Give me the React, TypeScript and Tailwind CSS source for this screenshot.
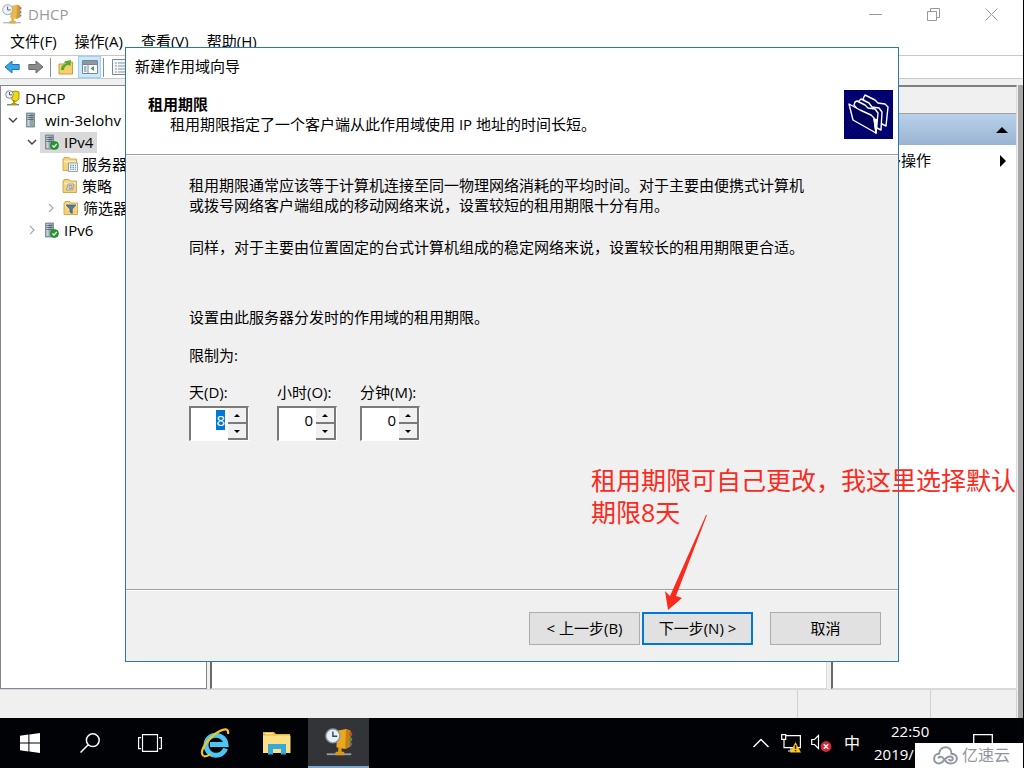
import React, { useEffect, useRef, useState } from 'react';

const DhcpIcon = ({ className }) => (
  <svg viewBox="0 0 32 32" className={className}>
    <path d="M2 29h28v2H2z" fill="#9aa0a6" />
    <path d="M15 22h4v5h3v4H12v-4h3z" fill="#d99a1c" />
    <path d="M14 3l10-2 5 2v18l-6 3-10-2z" fill="#e9a820" />
    <path d="M24 1l5 2v18l-6 3z" fill="#c77f12" />
    <path d="M28 5h3v4h-3z" fill="#c0453a" />
    <path d="M28 11h3v4h-3z" fill="#4d8f3a" />
    <path d="M28 17h3v3h-3z" fill="#3c74b5" />
    <circle cx="9" cy="9" r="8" fill="#e8eff5" stroke="#8a97a3" strokeWidth="1.6" />
    <path d="M9 4v5.5h5" fill="none" stroke="#33475b" strokeWidth="1.6" />
  </svg>
);

const DhcpRootIcon = () => (
  <svg viewBox="0 0 16 16" className="h-4 w-4">
    <path d="M2 14h12v1.4H2z" fill="#7b8288" />
    <path d="M8 10h2v3h1.5v2h-5v-2H8z" fill="#b89b00" />
    <path d="M6 2l5-1 3 1v7l-3 2.5L7 10z" fill="#f2d90a" stroke="#8d7b00" strokeWidth=".8" />
    <circle cx="4.5" cy="4.5" r="3.8" fill="#eef3f6" stroke="#737c85" strokeWidth=".9" />
    <path d="M4.5 2v2.8H7" fill="none" stroke="#444" strokeWidth=".9" />
  </svg>
);

const ServerIcon = ({ checked }) => (
  <svg viewBox="0 0 16 16" className="h-4 w-4">
    <path d="M1.5 1h8v14h-8z" fill="#93a3ae" stroke="#6f7d88" strokeWidth=".8" />
    <path d="M2.5 2h2v12h-2z" fill="#c9d4dc" />
    <path d="M2.5 3.5h6M2.5 5.5h6M2.5 7.5h6" stroke="#4d5c68" strokeWidth=".8" />
    <path d="M6.5 11h2v1.5h-2z" fill="#66d24a" />
    {checked && (
      <>
        <circle cx="10.5" cy="11.5" r="4" fill="#1f9d2c" stroke="#0e7319" strokeWidth=".6" />
        <path d="M8.4 11.5l1.6 1.6 2.8-3.2" fill="none" stroke="#fff" strokeWidth="1.3" />
      </>
    )}
  </svg>
);

const FolderIcon = ({ kind }) => (
  <svg viewBox="0 0 16 16" className="h-4 w-4">
    <path d="M1 3h1V1.5h5L8 3h6.5v11.5H1z" fill="#f3d37c" stroke="#cfa544" strokeWidth=".9" />
    <path d="M2 4.5h12v2H2z" fill="#fbe9b5" />
    {kind === 'options' && (
      <>
        <path d="M6.5 7h9v8.5h-9z" fill="#f5f8fb" stroke="#7f8b96" strokeWidth=".8" />
        <path d="M8 9.3h6M8 11.3h6M8 13.3h6" stroke="#3f7fb8" strokeWidth="1.1" strokeDasharray="1.5 1" />
      </>
    )}
    {kind === 'policy' && (
      <path d="M6 6h6l-1.5 6H4.5zM7 7.5v3h3v-3z" fill="#e6eaee" stroke="#8c8f93" strokeWidth=".8" />
    )}
    {kind === 'filter' && <path d="M3 5h10L9.2 9v4.5L7 12V9z" fill="#55799c" stroke="#37536e" strokeWidth=".7" />}
  </svg>
);

const Chevron = ({ open }) => (
  <svg viewBox="0 0 10 10" className="h-2.5 w-2.5">
    {open ? (
      <path d="M1 3l4 4 4-4" fill="none" stroke="#404040" strokeWidth="1.4" />
    ) : (
      <path d="M3 .8L7 5 3 9.2" fill="none" stroke="#a6a6a6" strokeWidth="1.2" />
    )}
  </svg>
);

const ArrowIcon = ({ flip, fill, stroke }) => (
  <svg viewBox="0 0 16 14" className="h-3.5 w-4">
    <path
      d="M1 7l7-6v3.5h7.2v5H8V13z"
      transform={flip ? 'matrix(-1 0 0 1 16 0)' : undefined}
      fill={fill}
      stroke={stroke}
    />
  </svg>
);

const treeItems = [
  { label: 'DHCP', pad: 'pl-1', icon: <DhcpRootIcon /> },
  { label: 'win-3elohv', pad: 'pl-[7px]', chevron: 'open', icon: <ServerIcon /> },
  { label: 'IPv4', pad: 'pl-[26px]', chevron: 'open', icon: <ServerIcon checked />, selected: true },
  { label: '服务器', pad: 'pl-[61px]', icon: <FolderIcon kind="options" /> },
  { label: '策略', pad: 'pl-[61px]', icon: <FolderIcon kind="policy" /> },
  { label: '筛选器', pad: 'pl-[45px]', chevron: 'closed', icon: <FolderIcon kind="filter" /> },
  { label: 'IPv6', pad: 'pl-[26px]', chevron: 'closed', icon: <ServerIcon checked /> },
];

const Tree = () => (
  <nav className="w-[207px] shrink-0 overflow-hidden border border-[#828790] bg-white pt-px">
    <ul>
      {treeItems.map((item) => (
        <li key={item.label} className={`flex h-[22px] items-center whitespace-nowrap ${item.pad}`}>
          {item.chevron && (
            <span className="mr-[3px] w-2.5">
              <Chevron open={item.chevron === 'open'} />
            </span>
          )}
          <span className={`flex h-[21px] items-center gap-1 px-1 ${item.chevron ? '' : '-ml-1'} ${item.selected ? 'bg-[#d9d9d9]' : ''}`}>
            {item.icon}
            <span>{item.label}</span>
          </span>
        </li>
      ))}
    </ul>
  </nav>
);

const Toolbar = () => (
  <div className="flex h-[24px] items-center border-y border-[#c8c8c8] bg-white pl-1">
    <button aria-label="后退" className="mr-2"><ArrowIcon fill="#38a5e8" stroke="#1b76b8" /></button>
    <button aria-label="前进"><ArrowIcon flip fill="#8c8c8c" stroke="#6b6b6b" /></button>
    <span className="mx-1.5 h-[19px] w-px bg-[#8d8d8d]" />
    <button aria-label="向上" className="ml-px">
      <svg viewBox="0 0 16 16" className="h-4 w-4">
        <path d="M1 5h5l1-2h7.500v12H1z" fill="#f4cf6b" stroke="#c99e3b" />
        <path d="M3 11c0-4 2-6 5-6L6.500 2.500 13 1l-.5 6-2-1C8 6 6 8 6 11z" fill="#4fae2e" />
      </svg>
    </button>
    <button aria-label="显示树" className="ml-1 flex h-[22px] w-[23px] items-center justify-center border border-[#99d1ff] bg-[#cce8ff]">
      <svg viewBox="0 0 16 14" className="h-3.5 w-4">
        <path d="M.5.5h15v13H.5z" fill="#fff" stroke="#7a8791" />
        <path d="M1 1h14v3H1z" fill="#8b98a2" />
        <path d="M6 4v9M1 4.500h14" stroke="#7a8791" />
        <path d="M2 7h2.500M2 9h2.500M2 11h2.500" stroke="#3c74b5" />
        <path d="M12 6v5L8.500 8.500z" fill="#3f9f3a" />
      </svg>
    </button>
    <span className="mx-0.5 h-[19px] w-px bg-[#8d8d8d]" />
    <button aria-label="属性" className="ml-1.5">
      <svg viewBox="0 0 16 16" className="h-4 w-4">
        <path d="M.5.5h15v15H.5z" fill="#f4f6f8" stroke="#7a8791" />
        <path d="M3 4h2M3 7h2M3 10h2M3 13h2M6 4h8M6 7h8M6 10h8M6 13h8" stroke="#8595a1" />
      </svg>
    </button>
  </div>
);

const Spinner = ({ id, label, initial, selected }) => {
  const [value, setValue] = useState(initial);
  const inputRef = useRef(null);

  useEffect(() => {
    if (selected && inputRef.current) {
      inputRef.current.focus();
      inputRef.current.select();
    }
  }, [selected]);

  return (
    <div className="flex flex-col gap-1">
      <label htmlFor={id} className="h-5 whitespace-nowrap">{label}</label>
      <div className="flex h-[35px] w-[60px] border border-t-2 border-l-2 border-white border-t-[#7a7a7a] border-l-[#7a7a7a] bg-white">
        <input
          ref={inputRef}
          id={id}
          type="text"
          value={value}
          onChange={(e) => setValue(e.target.value)}
          className="h-6 w-0 flex-1 bg-white pr-[3px] text-right text-[15px] outline-none selection:bg-[#0078d7] selection:text-white"
        />
        <div className="flex w-5 flex-col bg-[#f0f0f0]">
          <button
            aria-label={`${label} +`}
            onClick={() => setValue(String(Number(value) + 1))}
            className="flex flex-1 items-center justify-center border-r-2 border-b-2 border-[#7a7a7a]"
          >
            <svg viewBox="0 0 6 3" className="h-[3px] w-1.5"><path d="M0 3l3-3 3 3z" /></svg>
          </button>
          <button
            aria-label={`${label} -`}
            onClick={() => setValue(String(Math.max(0, Number(value) - 1)))}
            className="flex flex-1 items-center justify-center border-r-2 border-b-2 border-[#7a7a7a]"
          >
            <svg viewBox="0 0 6 3" className="h-[3px] w-1.5"><path d="M0 0l3 3 3-3z" /></svg>
          </button>
        </div>
      </div>
    </div>
  );
};

const Wizard = () => (
  <section className="absolute top-[47px] left-[125px] flex h-[615px] w-[774px] flex-col border border-[#2a7ab0] bg-[#f0f0f0]">
    <header className="flex h-[107px] shrink-0 flex-col border-b border-[#a0a0a0] bg-white">
      <h1 className="h-[38px] pl-[9px] leading-9">新建作用域向导</h1>
      <div className="flex items-start justify-between pr-[5px] pl-[22px]">
        <div className="pt-2 leading-5">
          <h2 className="font-bold">租用期限</h2>
          <p className="pl-[22px]">租用期限指定了一个客户端从此作用域使用 IP 地址的时间长短。</p>
        </div>
        <svg viewBox="0 0 49 49" className="mt-1 h-[49px] w-[49px]">
          <defs>
            <pattern id="dots" width="4" height="4" patternUnits="userSpaceOnUse">
              <path d="M0 0h4v4H0z" fill="#000080" />
              <path d="M0 0h2v2H0zM2 2h2v2H2z" fill="#00005c" />
            </pattern>
          </defs>
          <path d="M0 0h49v49H0z" fill="url(#dots)" />
          <g fill="#00005c" stroke="#fff" strokeWidth="1.4" strokeLinejoin="round">
            <path d="M19 9l2-4 10 5 3 3 7 1 3 3-2 19-4-2z" />
            <path d="M14 12l3-3 8 4 3 4 7 1 3 4-1 18-4-2z" />
            <path d="M10 15l1-3 2-1 8 4 3 3 7 1 3 4-2 20z" />
            <path d="M5 14l4 16 23 13-2-15-3-3-11-5z" />
            <path d="M32 43l-2-14 3 1z" fill="#fff" />
          </g>
        </svg>
      </div>
    </header>

    <div className="flex-1 border-t border-white pt-[19px] pl-[63px] leading-5">
      <p>
        租用期限通常应该等于计算机连接至同一物理网络消耗的平均时间。对于主要由便携式计算机
        <br />
        或拨号网络客户端组成的移动网络来说，设置较短的租用期限十分有用。
      </p>
      <p className="mt-[22px]">同样，对于主要由位置固定的台式计算机组成的稳定网络来说，设置较长的租用期限更合适。</p>
      <p className="mt-[50px]">设置由此服务器分发时的作用域的租用期限。</p>
      <p className="mt-[18px]">限制为:</p>
      <div className="mt-[17px] flex">
        <div className="w-[88px]"><Spinner id="days" label="天(D):" initial="8" selected /></div>
        <div className="w-[83px]"><Spinner id="hours" label="小时(O):" initial="0" /></div>
        <Spinner id="minutes" label="分钟(M):" initial="0" />
      </div>
    </div>

    <footer className="flex h-[72px] shrink-0 items-start justify-end border-t border-[#a0a0a0]">
      <div className="flex w-full justify-end border-t border-white pt-[21px] pr-[17px]">
        <button className="h-[33px] w-[111px] border border-[#adadad] bg-[#e1e1e1]">&lt; 上一步(B)</button>
        <button className="ml-0.5 h-[33px] w-[111px] border-2 border-[#0078d7] bg-[#e1e1e1]">下一步(N) &gt;</button>
        <button className="ml-[17px] h-[33px] w-[111px] border border-[#adadad] bg-[#e1e1e1]">取消</button>
      </div>
    </footer>
  </section>
);

const Annotation = () => (
  <>
    <p className="absolute top-[464px] left-[591px] text-[25px] leading-8 whitespace-nowrap text-[#fb2a1c]">
      租用期限可自己更改，我这里选择默认
      <br />
      期限8天
    </p>
    <svg viewBox="0 0 46 98" className="absolute top-[514px] left-[662px] h-[98px] w-[46px]">
      <path d="M44 1h1L14 82l6 2L6 96 3 77l5 5z" fill="#fb2a1c" />
    </svg>
  </>
);

const Taskbar = () => (
  <footer className="relative flex h-[50px] shrink-0 items-stretch justify-between bg-[#010205] text-white">
    <div className="flex">
      <button aria-label="开始" className="flex w-[60px] items-center justify-center">
        <svg viewBox="0 0 20 20" className="h-5 w-5" fill="#fff">
          <path d="M0 2.800L8.400 1.600v7.900H0zM9.400 1.500L20 0v9.500H9.400zM0 10.500h8.400v7.900L0 17.200zM9.400 10.500H20V20L9.400 18.500z" />
        </svg>
      </button>
      <button aria-label="搜索" className="flex w-[60px] items-center justify-center">
        <svg viewBox="0 0 20 20" className="h-5 w-5" fill="none" stroke="#fff" strokeWidth="1.500">
          <circle cx="12.800" cy="7.200" r="6.400" />
          <path d="M8.200 11.800L.5 19.500" />
        </svg>
      </button>
      <button aria-label="任务视图" className="flex w-[60px] items-center justify-center">
        <svg viewBox="0 0 24 18" className="h-[18px] w-6" fill="none" stroke="#fff" strokeWidth="1.200">
          <path d="M4.500.6h15v16.800h-15zM3 3.600H.6v11H3M21 3.600h2.400v11H21" />
        </svg>
      </button>
      <button aria-label="Internet Explorer" className="ml-1 flex w-[62px] items-center justify-center">
        <svg viewBox="0 0 30 30" className="h-[30px] w-[30px]" fill="none">
          <path d="M25.500 20.500A10 10 0 1 1 26 16.500H10" stroke="#4cc5f2" strokeWidth="5" />
          <path d="M3.500 28C-1.500 24 7 11 18 4c6-3.800 11-4 10 2" stroke="#f4c51f" strokeWidth="2.200" />
          <path d="M3.500 28c2 1 5-.5 7-1.600" stroke="#f4c51f" strokeWidth="2.200" />
        </svg>
      </button>
      <button aria-label="文件资源管理器" className="flex w-[62px] items-center justify-center">
        <svg viewBox="0 0 28 24" className="h-6 w-7">
          <path d="M0 1h11l2 2h14v4H0z" fill="#e8b93c" />
          <path d="M0 4.500h27.500V22H0z" fill="#fbdf86" />
          <path d="M2 2h8v1.200H2z" fill="#fff3c5" />
          <path d="M5 13h18v10.500h-5V18h-8v5.500H5z" fill="#35a9d8" />
        </svg>
      </button>
      <button aria-label="DHCP" className="flex w-[61px] items-center justify-center border-b-2 border-[#76a9d4] bg-[#333438]">
        <DhcpIcon className="h-7 w-7" />
      </button>
    </div>

    <div className="flex items-center pr-[30px]">
      <svg viewBox="0 0 16 10" className="mr-3 h-2.5 w-4" fill="none" stroke="#fff" strokeWidth="1.400">
        <path d="M.5 9L8 1.500 15.500 9" />
      </svg>
      <svg viewBox="0 0 21 19" className="mr-[9px] h-[19px] w-[21px]">
        <path d="M5 1.600h14.400v12H3V6M7 17h6M10 14v3M.7.7h4v4.600h-4z" fill="none" stroke="#fff" strokeWidth="1.200" />
        <path d="M14.500 8L20 18.500H9z" fill="#fdc41a" />
        <path d="M14.500 11v4M14.500 16v1.300" stroke="#222" strokeWidth="1.500" />
      </svg>
      <svg viewBox="0 0 21 18" className="mr-3 h-[18px] w-[21px]">
        <path d="M.7 5.500h2.800L7.500 1.500v13l-4-4H.7z" fill="none" stroke="#fff" strokeWidth="1.200" />
        <circle cx="15" cy="12.500" r="5.400" fill="#d7263b" />
        <path d="M12.800 10.300l4.400 4.400M17.200 10.300l-4.400 4.400" stroke="#fff" strokeWidth="1.400" />
      </svg>
      <span className="mr-3.5 text-base">中</span>
      <div className="mr-3.5 flex h-full w-[85px] flex-col justify-center leading-[23px]">
        <time className="pl-[17px]">22:50</time>
        <time>2019/</time>
      </div>
      <svg viewBox="0 0 20 18" className="h-[18px] w-5" fill="none" stroke="#fff" strokeWidth="1.300">
        <path d="M.7.700h18.600v13H13l-3 3v-3H.7z" />
      </svg>
    </div>

    <div className="absolute right-0 bottom-0 flex h-[25px] w-[108px] items-center gap-1 bg-white pl-[18px] text-base leading-[25px] text-[#9097a0]">
      <svg viewBox="0 0 25 19" className="h-[19px] w-[25px]" fill="none" stroke="#9097a0" strokeWidth="2">
        <path d="M5.500 12.500c0-2 3-2.500 5 0s3 5 7 5c8 0 8.500-9.500 1-9.800C18.500-1 7-1 6 7.700-.5 8-.5 17.500 6 17.500c5 0 5.500-7 11-7 3.500 0 3.500 4 1 4-1.500 0-2-1-2-1.500" />
      </svg>
      亿速云
    </div>
  </footer>
);

const App = () => {
  return (
    <div className="relative flex min-h-screen flex-col overflow-hidden border-r border-black bg-[#f0f0f0] font-['Open_Sans','Noto_Sans_CJK_SC',sans-serif] text-[15px] text-black">
      <div className="flex h-7 items-center bg-white pl-0.5 text-[#999]">
        <DhcpIcon className="h-5 w-5 opacity-80" />
        <span className="ml-1.5 flex-1">DHCP</span>
        <div className="flex items-center gap-[45px] pr-[25px]">
          <button aria-label="最小化">
            <svg viewBox="0 0 13 13" className="h-[13px] w-[13px]"><path d="M0 6.500h13" stroke="#999" /></svg>
          </button>
          <button aria-label="还原">
            <svg viewBox="0 0 13 13" className="h-[13px] w-[13px]" fill="none" stroke="#999">
              <path d="M.5 3.500h9v9h-9zM3.500 3V.5h9v9H10" />
            </svg>
          </button>
          <button aria-label="关闭">
            <svg viewBox="0 0 13 13" className="h-[13px] w-[13px]"><path d="M.5.500l12 12M12.500.500l-12 12" stroke="#999" /></svg>
          </button>
        </div>
      </div>

      <div className="flex h-[27px] items-center gap-[18px] bg-white pl-2.5 whitespace-nowrap">
        <button>文件(F)</button>
        <button>操作(A)</button>
        <button>查看(V)</button>
        <button>帮助(H)</button>
      </div>
      <Toolbar />

      <main className="flex flex-1 pt-1.5">
        <div className="flex flex-1 flex-col">
          <div className="flex flex-1">
            <Tree />
            <div className="ml-[3px] flex-1 border-r border-b border-l-2 border-[#d9d9d9] border-l-[#696969] bg-white" />
            <aside className="ml-1 w-[186px] border-t-2 border-r border-b border-l-2 border-[#d9d9d9] border-t-[#808080] border-l-[#696969] bg-white">
              <div className="h-[27px] border-b border-[#a0a0a0] bg-[#f0f0f0]" />
              <button aria-label="DHCP" className="flex h-[31px] w-full items-center justify-end bg-linear-to-b from-[#b9d1ea] to-[#99b4d1] pr-2">
                <svg viewBox="0 0 12 6" className="h-1.5 w-3"><path d="M0 6l6-6 6 6z" /></svg>
              </button>
              <button className="flex h-[31px] w-full items-center justify-between pr-2.5 pl-[38px]">
                更多操作
                <svg viewBox="0 0 6 12" className="h-3 w-1.5"><path d="M0 0l6 6-6 6z" /></svg>
              </button>
            </aside>
          </div>
          <div className="flex h-[29px] justify-end border-t border-[#d9d9d9]">
            <span className="w-[133px] border-l border-[#d0d0d0]" />
            <span className="w-[87px] border-x border-[#d0d0d0]" />
          </div>
        </div>
        <div className="ml-px w-[5px] bg-[#a7a7a7]" />
      </main>

      <Wizard />
      <Annotation />
      <Taskbar />
    </div>
  );
};

export default App;
